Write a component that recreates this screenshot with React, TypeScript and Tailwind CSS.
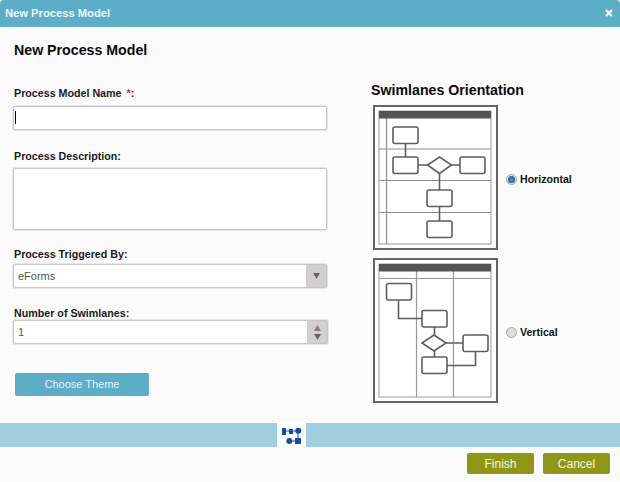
export default function App() {
  const field = "-ml-px border border-[#c6c6c6] shadow-[0_0_0_1px_#e6e6e6] rounded-[2px] bg-white";
  const label = "text-[10.7px] leading-[14px] font-bold text-[#1a1a1a]";

  return (
    <div className="w-[620px] h-[482px] flex flex-col bg-[#fbfbfb] overflow-hidden rounded-t-[4px] font-['Liberation_Sans',Arial,sans-serif]">
      <div className="h-[27px] flex items-center justify-between bg-[#5cadc8] border-b border-[#6ab5ce] pl-[5px] pr-[7px]">
        <span className="text-[11.2px] font-bold text-[#eef8fb]">New Process Model</span>
        <svg width="8" height="8" viewBox="0 0 8 8">
          <path d="M1 1 7 7M7 1 1 7" stroke="#ffffff" strokeWidth="2" />
        </svg>
      </div>

      <div className="h-[396px] flex">
        <div className="w-[371px] pl-[14px] flex flex-col">
          <h1 className="mt-[15px] text-[14.2px] leading-[16px] font-bold text-[#0a0a0a]">New Process Model</h1>

          <div className={`mt-[28px] ${label}`}>
            Process Model Name <span className="text-[#ee2222] ml-[2px]">*</span>:
          </div>
          <div className={`mt-[6px] h-[24px] w-[314px] relative ${field}`}>
            <div className="absolute left-px top-[4px] w-px h-[13px] bg-black" />
          </div>

          <div className={`mt-[19px] ${label}`}>Process Description:</div>
          <div className={`mt-[5px] h-[62px] w-[314px] ${field}`} />

          <div className={`mt-[17px] ${label}`}>Process Triggered By:</div>
          <div className={`mt-[3px] h-[24px] w-[314px] flex ${field}`}>
            <span className="flex-1 pl-[4px] text-[11px] leading-[22px] text-[#555555]">eForms</span>
            <div className="w-[20px] bg-[#d2d0ce] flex items-center justify-center">
              <svg width="7" height="6" viewBox="0 0 7 6"><path d="M0 0H7L3.5 6Z" fill="#6f6460" /></svg>
            </div>
          </div>

          <div className={`mt-[18px] ${label}`}>Number of Swimlanes:</div>
          <div className={`h-[24px] w-[315px] flex ${field}`}>
            <span className="flex-1 pl-[4px] text-[11px] leading-[22px] text-[#555555]">1</span>
            <div className="w-[20px] bg-[#d2d0ce] flex flex-col items-center justify-center gap-[3px]">
              <svg width="7" height="6" viewBox="0 0 7 6"><path d="M0 6H7L3.5 0Z" fill="#8a7f7a" /></svg>
              <svg width="7" height="6" viewBox="0 0 7 6"><path d="M0 0H7L3.5 6Z" fill="#6f6460" /></svg>
            </div>
          </div>

          <button className="mt-[29px] ml-px w-[134px] h-[23px] rounded-[2px] bg-[#5cadc8] text-[11px] text-[#e4f3f8]">
            Choose Theme
          </button>
        </div>

        <div className="flex-1 flex flex-col">
          <h2 className="mt-[55px] text-[14.2px] leading-[16px] font-bold text-[#0a0a0a]">Swimlanes Orientation</h2>
          <div className="mt-[7px] ml-[2px] flex items-center">
            <HorizontalDiagram />
            <Radio checked label="Horizontal" />
          </div>
          <div className="mt-[8px] ml-[2px] flex items-center">
            <VerticalDiagram />
            <Radio label="Vertical" />
          </div>
        </div>
      </div>

      <div className="h-[24px] flex bg-[#9fcfdf]">
        <div className="ml-[277px] w-[29px] bg-white flex items-start pl-[5px] pt-[4px]">
          <svg width="20" height="18" viewBox="0 0 20 18">
            <path d="M4 4H16V14M7 14H16" stroke="#0f4fa8" strokeWidth="1" fill="none" />
            <rect x="0" y="1" width="4" height="7" fill="#0f4fa8" />
            <rect x="7" y="2" width="4" height="5" fill="#0f4fa8" />
            <circle cx="16.3" cy="3.7" r="3" fill="#0f4fa8" />
            <circle cx="7.3" cy="14" r="3" fill="#0f4fa8" />
            <rect x="13" y="11" width="6" height="6" fill="#0f4fa8" />
          </svg>
        </div>
      </div>

      <div className="flex-1 flex justify-end gap-[9px] pt-[6px] pr-[10px]">
        <button className="w-[67px] h-[21px] rounded-[2px] bg-[#8f9716] text-[12px] text-[#f4f4e0]">Finish</button>
        <button className="w-[67px] h-[21px] rounded-[2px] bg-[#8f9716] text-[12px] text-[#f4f4e0]">Cancel</button>
      </div>
    </div>
  );
}

function Radio({ checked, label }: { checked?: boolean; label: string }) {
  return (
    <div className="ml-[8px] pt-[4px] flex items-center gap-[3px]">
      <div className="w-[11px] h-[11px] rounded-full border border-[#a8a8a8] bg-[#dedede] flex items-center justify-center">
        {checked && <div className="w-[7px] h-[7px] rounded-full bg-[radial-gradient(circle,#3f9ad6,#11518c)]" />}
      </div>
      <span className="text-[10.6px] font-bold text-[#111111]">{label}</span>
    </div>
  );
}

function Box({ x, y }: { x: number; y: number }) {
  return <rect x={x} y={y} width="25" height="16.5" rx="2" fill="#ffffff" stroke="#5e5e5e" strokeWidth="1.6" />;
}

function Frame({ children }: { children: React.ReactNode }) {
  return (
    <svg width="125" height="145" viewBox="0 0 125 145" className="shrink-0">
      <rect x="1" y="1" width="123" height="143" fill="#ffffff" stroke="#666666" strokeWidth="2" />
      <rect x="6" y="6" width="112" height="133" fill="none" stroke="#999999" strokeWidth="1" />
      {children}
      <rect x="6" y="6" width="112" height="7.5" fill="#555555" />
    </svg>
  );
}

function HorizontalDiagram() {
  return (
    <Frame>
      <g stroke="#999999" strokeWidth="1" fill="none">
        <path d="M13.5 13V139" strokeWidth="1.4" />
        <path d="M6 44H118M6 75.5H118M6 107.5H118" stroke="#8a8a8a" />
      </g>
      <path d="M32.5 38V52M45 60H55M78 60H87M66.5 68V85M66.5 101V116" stroke="#5e5e5e" strokeWidth="1.6" fill="none" />
      <Box x={20} y={22} />
      <Box x={20} y={52} />
      <path d="M66.5 52 78.5 60 66.5 68.5 54.5 60Z" fill="#ffffff" stroke="#5e5e5e" strokeWidth="1.6" />
      <Box x={87} y={52} />
      <Box x={54} y={85} />
      <Box x={54} y={116} />
    </Frame>
  );
}

function VerticalDiagram() {
  return (
    <Frame>
      <g stroke="#999999" strokeWidth="1.2" fill="none">
        <path d="M6 20.5H118M43.5 13V139M80.5 13V139" />
      </g>
      <path d="M25.5 42V60.5H49M61.5 69V77M61.5 93V99M73 85H90M102.5 93V107.5H74" stroke="#5e5e5e" strokeWidth="1.6" fill="none" />
      <Box x={13.5} y={25.5} />
      <Box x={49} y={52.5} />
      <path d="M61 77 73 85 61 93 49 85Z" fill="#ffffff" stroke="#5e5e5e" strokeWidth="1.6" />
      <Box x={90} y={77} />
      <Box x={49} y={99} />
    </Frame>
  );
}
